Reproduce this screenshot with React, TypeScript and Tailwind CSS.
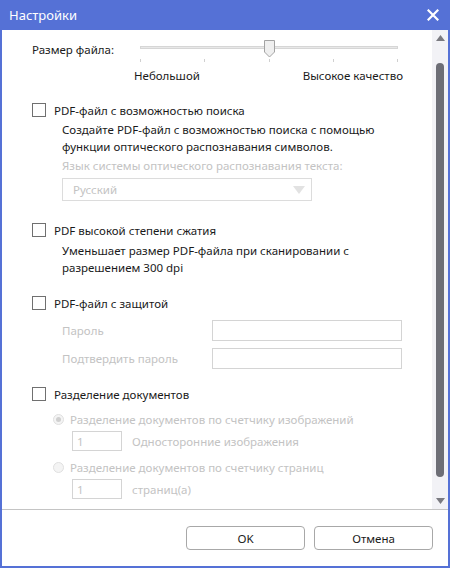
import React from "react";

function Checkbox() {
  return <span className="inline-block h-[14px] w-[14px] shrink-0 border border-[#707070] bg-white" />;
}

function Radio({ checked }: { checked?: boolean }) {
  return (
    <span className="flex h-[11px] w-[11px] shrink-0 items-center justify-center rounded-full border border-[#e0e0e0] bg-[#f4f4f4]">
      {checked && <span className="h-[5px] w-[5px] rounded-full bg-[#cfcfcf]" />}
    </span>
  );
}

function CheckRow({ label }: { label: string }) {
  return (
    <div className="flex h-[14px] items-center gap-[8px]">
      <Checkbox />
      <span className="text-[#1a1a1a]">{label}</span>
    </div>
  );
}

export default function App() {
  const ticks = [0, 1, 2, 3, 4];
  return (
    <div
      className="flex h-[568px] w-[450px] flex-col bg-[#5571d6] px-[2px] pb-[2px] text-[11.5px] leading-[17px]"
      style={{ fontFamily: '"Noto Sans", "Open Sans", sans-serif' }}
    >
      {/* title bar */}
      <div className="flex h-[30px] shrink-0 items-center justify-between pl-[7px] pr-[9px] text-[13px] text-white">
        <span>Настройки</span>
        <svg width="12" height="12" viewBox="0 0 12 12">
          <path d="M1.5 1.5 L10.5 10.5 M10.5 1.5 L1.5 10.5" stroke="white" strokeWidth="2.2" strokeLinecap="square" />
        </svg>
      </div>

      <div className="flex flex-1 flex-col bg-white">
        <div className="flex h-[480px] border-b border-[#c4c4c4]">
          {/* scrollable content */}
          <div className="flex-1 overflow-hidden pl-[30px]">
            {/* file size slider */}
            <div className="flex pt-[10px]">
              <div className="w-[108px] pt-[1px] text-[#1a1a1a]">Размер файла:</div>
              <div className="w-[258px]">
                <div className="relative h-[18px]">
                  <div className="absolute left-0 right-0 top-[6px] h-[3px] border border-[#d6d6d6] bg-[#e8e8e8]" />
                  <svg className="absolute left-[124px] top-0" width="11" height="18" viewBox="0 0 11 18">
                    <path d="M0.5 0.5 H10.5 V12 L5.5 17 L0.5 12 Z" fill="#efefef" stroke="#a3a3a3" />
                  </svg>
                </div>
                <div className="flex h-[6px] justify-between pt-[1px]">
                  {ticks.map((t) => (
                    <span key={t} className="h-[3px] w-px bg-[#d0d0d0]" />
                  ))}
                </div>
                <div className="mt-[3px] flex justify-between">
                  <span className="-ml-[6px] text-[#1a1a1a]">Небольшой</span>
                  <span className="-mr-[5px] text-[#1a1a1a]">Высокое качество</span>
                </div>
              </div>
            </div>

            {/* searchable pdf */}
            <div className="mt-[19px]">
              <CheckRow label="PDF-файл с возможностью поиска" />
              <div className="mt-[4px] pl-[30px] text-[#1a1a1a]">
                <div>Создайте PDF-файл с возможностью поиска с помощью</div>
                <div>функции оптического распознавания символов.</div>
              </div>
              <div className="mt-[2px] pl-[30px] text-[#c3c3c3]">Язык системы оптического распознавания текста:</div>
              <div className="ml-[30px] mt-[4px] flex h-[23px] w-[250px] items-center justify-between border border-[#dcdcdc] pl-[10px] pr-[6px] text-[#c3c3c3]">
                <span>Русский</span>
                <svg width="12" height="8" viewBox="0 0 12 8">
                  <path d="M0 0 H12 L6 8 Z" fill="#e2e2e2" />
                </svg>
              </div>
            </div>

            {/* compressed pdf */}
            <div className="mt-[22px]">
              <CheckRow label="PDF высокой степени сжатия" />
              <div className="mt-[5px] pl-[30px] text-[#1a1a1a]">
                <div>Уменьшает размер PDF-файла при сканировании с</div>
                <div>разрешением 300 dpi</div>
              </div>
            </div>

            {/* protected pdf */}
            <div className="mt-[20px]">
              <CheckRow label="PDF-файл с защитой" />
              <div className="mt-[10px] flex flex-col gap-[7px] pl-[30px] text-[#c3c3c3]">
                <div className="flex items-center">
                  <span className="w-[150px]">Пароль</span>
                  <span className="h-[21px] w-[190px] border border-[#d4d4d4]" />
                </div>
                <div className="flex items-center">
                  <span className="w-[150px]">Подтвердить пароль</span>
                  <span className="h-[21px] w-[190px] border border-[#d4d4d4]" />
                </div>
              </div>
            </div>

            {/* split documents */}
            <div className="mt-[18px]">
              <CheckRow label="Разделение документов" />
              <div className="mt-[10px] pl-[21px] text-[#c3c3c3]">
                <div className="flex items-center gap-[6px]">
                  <Radio checked />
                  <span>Разделение документов по счетчику изображений</span>
                </div>
                <div className="ml-[19px] mt-[3px] flex items-center">
                  <span className="flex h-[20px] w-[50px] items-center border border-[#d4d4d4] pl-[4px]">1</span>
                  <span className="ml-[10px]">Односторонние изображения</span>
                </div>
                <div className="mt-[8px] flex items-center gap-[6px]">
                  <Radio />
                  <span>Разделение документов по счетчику страниц</span>
                </div>
                <div className="ml-[19px] mt-[3px] flex items-center">
                  <span className="flex h-[20px] w-[50px] items-center border border-[#d4d4d4] pl-[4px]">1</span>
                  <span className="ml-[10px]">страниц(а)</span>
                </div>
              </div>
            </div>
          </div>

          {/* scrollbar */}
          <div className="flex w-[16px] flex-col items-center bg-[#f2f2f6]">
            <svg className="mt-[5px]" width="9" height="6" viewBox="0 0 9 6">
              <path d="M4.5 0 L9 6 H0 Z" fill="#7a7a80" />
            </svg>
            <div className="mt-[22px] h-[414px] w-[8px] rounded-full bg-[#6d6e76]" />
            <div className="flex-1" />
            <svg className="mb-[5px]" width="9" height="6" viewBox="0 0 9 6">
              <path d="M0 0 H9 L4.5 6 Z" fill="#7a7a80" />
            </svg>
          </div>
        </div>

        {/* footer */}
        <div className="flex flex-1 items-center justify-end gap-[9px] pr-[15px]">
          <button className="h-[24px] w-[119px] rounded-[4px] border border-[#a8a8a8] bg-white text-[#1a1a1a]">OK</button>
          <button className="h-[24px] w-[119px] rounded-[4px] border border-[#a8a8a8] bg-white text-[#1a1a1a]">Отмена</button>
        </div>
      </div>
    </div>
  );
}
